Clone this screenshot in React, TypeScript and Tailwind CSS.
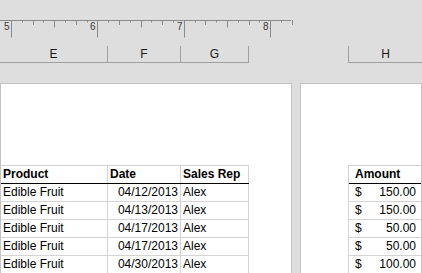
import React from "react";

const rows = [
  ["Edible Fruit", "04/12/2013", "Alex", "150.00"],
  ["Edible Fruit", "04/13/2013", "Alex", "150.00"],
  ["Edible Fruit", "04/17/2013", "Alex", "50.00"],
  ["Edible Fruit", "04/17/2013", "Alex", "50.00"],
  ["Edible Fruit", "04/30/2013", "Alex", "100.00"],
];

function Ruler() {
  const ticks: React.ReactNode[] = [];
  for (let i = 0; i < 27; i++) {
    const x = Math.round(11 + i * 10.8) + 0.5;
    const m = i % 8;
    let y2 = 22.5;
    if (m === 0) y2 = 37.5;
    else if (m === 4) y2 = 27.5;
    else if (m === 2 || m === 6) y2 = 25;
    ticks.push(<line key={"t" + i} x1={x} y1={20} x2={x} y2={y2} stroke="#8a8a8a" strokeWidth={1} />);
    if (m === 0) {
      ticks.push(
        <text key={"n" + i} x={x - 2} y={29.5} textAnchor="end" fontSize={10} fill="#3a3a3a" fontFamily="'Liberation Sans', Arial, sans-serif">
          {5 + i / 8}
        </text>
      );
    }
  }
  return (
    <svg width={422} height={42} className="block shrink-0">
      <line x1={0} y1={20.5} x2={291} y2={20.5} stroke="#8a8a8a" strokeWidth={1} />
      {ticks}
    </svg>
  );
}

export default function App() {
  return (
    <div className="w-[422px] h-[273px] overflow-hidden bg-[#dedede] flex flex-col font-['Liberation_Sans',Arial,sans-serif] text-black">
      <Ruler />
      <div className="flex h-[21px] shrink-0 text-[12px] text-[#1a1a1a]">
        <div className="flex w-[249px] border-b border-[#a0a0a0]">
          <div className="w-[108px] h-[16px] mt-[4px] border-r border-[#a0a0a0] flex items-center justify-center">E</div>
          <div className="w-[73px] h-[16px] mt-[4px] border-r border-[#a0a0a0] flex items-center justify-center">F</div>
          <div className="w-[68px] h-[16px] mt-[4px] border-r border-[#a0a0a0] flex items-center justify-center">G</div>
        </div>
        <div className="w-[99px]" />
        <div className="flex w-[74px] border-b border-[#a0a0a0]">
          <div className="flex-1 h-[16px] mt-[4px] border-l border-[#a0a0a0] flex items-center justify-center">H</div>
        </div>
      </div>
      <div className="h-[20px] shrink-0" />
      <div className="flex flex-1 min-h-0 text-[12px] leading-[17px]">
        <div className="w-[292px] shrink-0 bg-white border-l border-t border-r border-[#c4c4c4] pt-[81px]">
          <div className="w-[248px] border-t border-[#d4d4d4]">
            <div className="flex h-[18px] border-b border-black font-bold">
              <div className="w-[107px] pl-[2px] border-r border-[#d4d4d4]">Product</div>
              <div className="w-[73px] pl-[2px] border-r border-[#d4d4d4]">Date</div>
              <div className="w-[68px] pl-[2px] border-r border-[#d4d4d4]">Sales Rep</div>
            </div>
            {rows.map((r, i) => (
              <div key={i} className="flex h-[18px] border-b border-[#d4d4d4]">
                <div className="w-[107px] pl-[2px] border-r border-[#d4d4d4] whitespace-nowrap">{r[0]}</div>
                <div className="w-[73px] pr-[2px] border-r border-[#d4d4d4] text-right whitespace-nowrap">{r[1]}</div>
                <div className="w-[68px] pl-[2px] border-r border-[#d4d4d4] whitespace-nowrap">{r[2]}</div>
              </div>
            ))}
          </div>
        </div>
        <div className="w-[8px] shrink-0" />
        <div className="w-[122px] shrink-0 bg-white border-l border-t border-r border-[#c4c4c4] pt-[81px] pl-[47px]">
          <div className="w-[73px] border-t border-l border-[#d4d4d4]">
            <div className="h-[18px] border-b border-black font-bold pl-[6px]">Amount</div>
            {rows.map((r, i) => (
              <div key={i} className="flex justify-between h-[18px] border-b border-[#d4d4d4] pl-[6px] pr-[5px]">
                <span>$</span>
                <span>{r[3]}</span>
              </div>
            ))}
          </div>
        </div>
      </div>
    </div>
  );
}
